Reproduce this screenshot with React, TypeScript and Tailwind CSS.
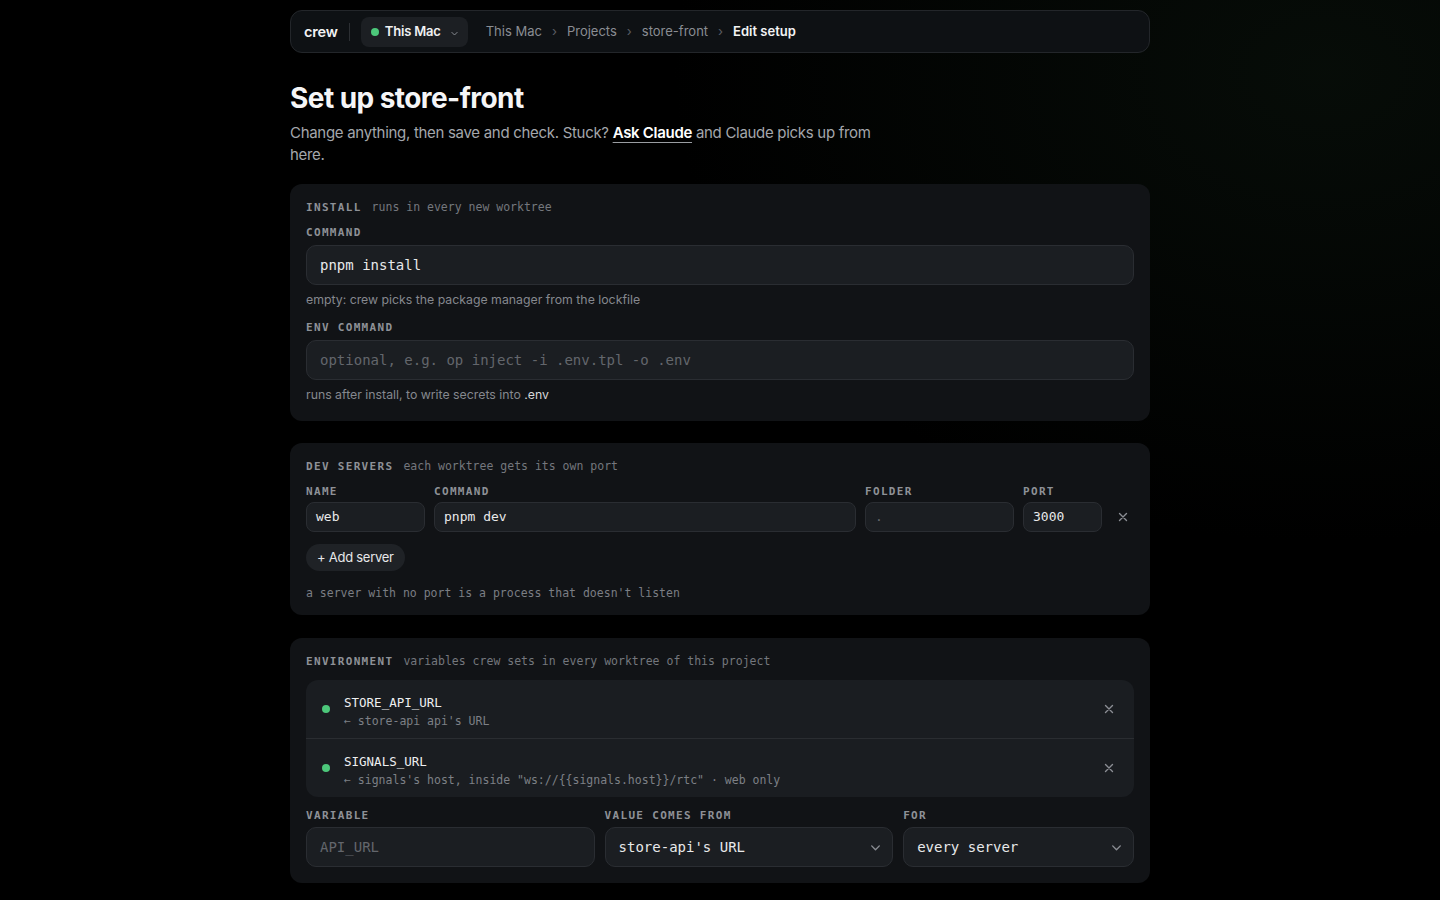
import React from "react";

const mono = "font-['DejaVu_Sans_Mono',monospace]";

function X({ className = "" }: { className?: string }) {
  return (
    <svg width="10" height="10" viewBox="0 0 10 10" className={className}>
      <path d="M1.5 1.5 L8.5 8.5 M8.5 1.5 L1.5 8.5" stroke="#8b8e94" strokeWidth="1.4" strokeLinecap="round" fill="none" />
    </svg>
  );
}

function Chevron({ size = 11, color = "#8a8d93" }: { size?: number; color?: string }) {
  return (
    <svg width={size} height={size} viewBox="0 0 12 12">
      <path d="M2.5 4.5 L6 8 L9.5 4.5" stroke={color} strokeWidth="1.3" strokeLinecap="round" strokeLinejoin="round" fill="none" />
    </svg>
  );
}

function SectionHead({ title, hint }: { title: string; hint: string }) {
  return (
    <div className={`${mono} flex items-baseline leading-[14px]`}>
      <span className="text-[11px] font-bold tracking-[0.12em] text-[#8e9197]">{title}</span>
      <span className="ml-[10px] text-[11.5px] text-[#74777d]">{hint}</span>
    </div>
  );
}

function Label({ children }: { children: React.ReactNode }) {
  return (
    <div className={`${mono} text-[11px] font-bold tracking-[0.12em] text-[#8e9197] leading-[14px]`}>{children}</div>
  );
}

function Field({ value, placeholder, big = true }: { value?: string; placeholder?: string; big?: boolean }) {
  const base = big
    ? "h-10 rounded-[10px] px-[13px] text-[14px]"
    : "h-[30px] rounded-[8px] px-[9px] text-[13px]";
  return (
    <div className={`${mono} ${base} flex w-full items-center whitespace-pre border border-[#2a2d32] bg-[#1b1e22] leading-[20px]`}>
      {value ? <span className="text-[#e8e9ea]">{value}</span> : <span className="text-[#63666c]">{placeholder}</span>}
    </div>
  );
}

export default function App() {
  return (
    <div className="min-h-[900px] w-full bg-black font-['Inter','Noto_Sans',sans-serif] text-white">
      <div className="min-h-[900px] bg-[radial-gradient(ellipse_65%_75%_at_92%_8%,rgba(30,56,36,0.22),rgba(0,0,0,0)_70%)] pt-[10px]">
        <div className="mx-auto w-[860px]">
          {/* Header */}
          <div className="flex h-[43px] items-center rounded-[12px] border border-[#23262a] bg-[#0e1114] pl-[13px]">
            <span className="text-[14.5px] font-semibold tracking-[-0.01em] text-[#f2f3f4]">crew</span>
            <span className="mx-[11px] h-[18px] w-px bg-[#2c2f33]" />
            <div className="flex h-[30px] items-center gap-[6px] rounded-[8px] bg-[#1c1f23] pl-[10px] pr-[9px]">
              <span className="h-[8px] w-[8px] rounded-full bg-[#4cc77a]" />
              <span className="text-[13px] font-semibold tracking-[-0.015em] text-[#f0f1f2]">This Mac</span>
              <span className="ml-[3px] mt-[3px]"><Chevron size={9} /></span>
            </div>
            <div className="ml-[18px] flex items-center text-[13px] text-[#8a8d93]">
              <span>This Mac</span>
              <span className="mx-[10px] text-[#5b5e63]">›</span>
              <span>Projects</span>
              <span className="mx-[10px] text-[#5b5e63]">›</span>
              <span>store-front</span>
              <span className="mx-[10px] text-[#5b5e63]">›</span>
              <span className="font-semibold text-[#f2f3f4]">Edit setup</span>
            </div>
          </div>

          {/* Title */}
          <h1 className="mt-[28px] text-[28px] font-bold leading-[34px] tracking-[-0.02em] text-[#f5f5f6]">Set up store-front</h1>
          <p className="mt-[7px] max-w-[600px] text-[15px] leading-[22px] tracking-[-0.02em] text-[#a4a7ac]">
            Change anything, then save and check. Stuck?{" "}
            <span className="font-semibold text-white underline decoration-[#9a9da2] underline-offset-[4px]">Ask Claude</span> and Claude picks up from
            here.
          </p>

          {/* Install */}
          <div className="mt-[18px] rounded-[12px] bg-[#111316] px-4 pb-[18px] pt-4">
            <SectionHead title="INSTALL" hint="runs in every new worktree" />
            <div className="mt-[11px]"><Label>COMMAND</Label></div>
            <div className="mt-[5px]"><Field value="pnpm install" /></div>
            <div className="mt-[7px] text-[12.3px] leading-[16px] text-[#85888e]">empty: crew picks the package manager from the lockfile</div>
            <div className="mt-[13px]"><Label>ENV COMMAND</Label></div>
            <div className="mt-[5px]"><Field placeholder="optional, e.g. op inject -i .env.tpl -o .env" /></div>
            <div className="mt-[7px] text-[12.3px] leading-[16px] text-[#85888e]">
              runs after install, to write secrets into <span className="text-[#d6d7d9]">.env</span>
            </div>
          </div>

          {/* Dev servers */}
          <div className="mt-[22px] rounded-[12px] bg-[#111316] px-4 pb-[15px] pt-4">
            <SectionHead title="DEV SERVERS" hint="each worktree gets its own port" />
            <div className="mt-[11px] grid grid-cols-[119px_1fr_149px_79px_23px] items-center gap-x-[9px] gap-y-[3px]">
              <Label>NAME</Label>
              <Label>COMMAND</Label>
              <Label>FOLDER</Label>
              <Label>PORT</Label>
              <span />
              <Field big={false} value="web" />
              <Field big={false} value="pnpm dev" />
              <Field big={false} placeholder="." />
              <Field big={false} value="3000" />
              <div className="flex justify-center"><X /></div>
            </div>
            <button className="mt-[12px] flex h-[27px] items-center rounded-full bg-[#1f2226] px-[11px] text-[13px] tracking-[-0.02em] text-[#e6e7e9]">+ Add server</button>
            <div className={`${mono} mt-[15px] text-[11.5px] leading-[14px] text-[#7b7e84]`}>a server with no port is a process that doesn't listen</div>
          </div>

          {/* Environment */}
          <div className="mt-[23px] rounded-[12px] bg-[#111316] px-4 pb-4 pt-4">
            <SectionHead title="ENVIRONMENT" hint="variables crew sets in every worktree of this project" />
            <div className="mt-[11px] overflow-hidden rounded-[12px] bg-[#1a1d21]">
              {[
                { name: "STORE_API_URL", sub: "← store-api api's URL" },
                { name: "SIGNALS_URL", sub: "← signals's host, inside \"ws://{{signals.host}}/rtc\" · web only" },
              ].map((r, i) => (
                <div key={r.name} className={`flex items-center pl-[16px] pr-[20px] ${i > 0 ? "border-t border-[#2a2d31]" : ""}`}>
                  <span className="mt-[25px] h-[8px] w-[8px] self-start rounded-full bg-[#4cc77a]" />
                  <div className={`${mono} ml-[14px] flex-1 pb-[9px] pt-[14px]`}>
                    <div className="text-[12.5px] leading-[18px] text-[#eeeff0]">{r.name}</div>
                    <div className="mt-[1px] text-[11.5px] leading-[16px] text-[#7d8086]">{r.sub}</div>
                  </div>
                  <X />
                </div>
              ))}
            </div>
            <div className="mt-[12px] grid grid-cols-[5fr_5fr_4fr] gap-x-[10px] gap-y-[4px]">
              <Label>VARIABLE</Label>
              <Label>VALUE COMES FROM</Label>
              <Label>FOR</Label>
              <Field placeholder="API_URL" />
              <div className={`${mono} flex h-10 items-center justify-between rounded-[10px] border border-[#2a2d32] bg-[#1b1e22] pl-[13px] pr-[10px] text-[14px] text-[#e8e9ea]`}>
                <span>store-api's URL</span>
                <Chevron size={13} />
              </div>
              <div className={`${mono} flex h-10 items-center justify-between rounded-[10px] border border-[#2a2d32] bg-[#1b1e22] pl-[13px] pr-[10px] text-[14px] text-[#e8e9ea]`}>
                <span>every server</span>
                <Chevron size={13} />
              </div>
            </div>
          </div>
        </div>
      </div>
    </div>
  );
}
